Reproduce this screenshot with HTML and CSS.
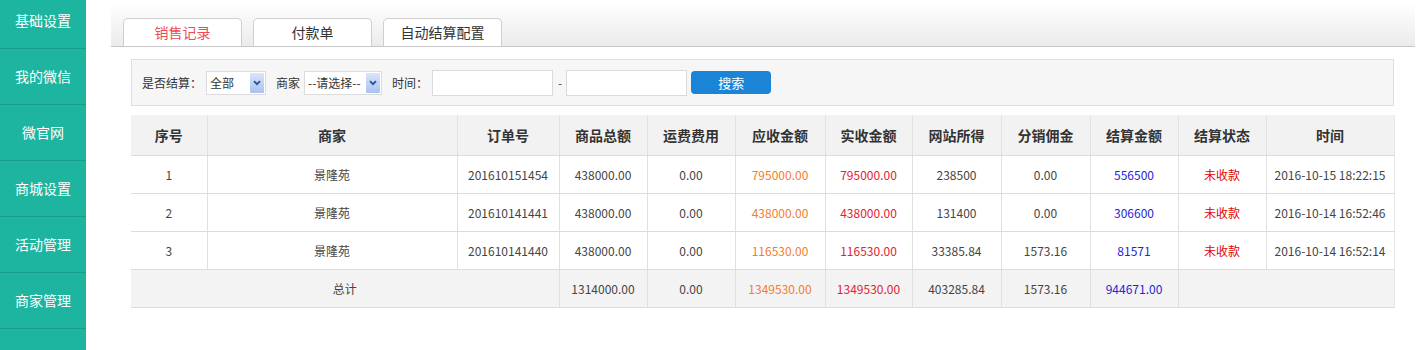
FILE: index.html
```html
<!DOCTYPE html>
<html>
<head>
  <meta charset="utf-8">
  <title>销售记录</title>
  <link rel="stylesheet" href="styles.css">
</head>
<body>
  <div class="page">
    <ul class="menu">
      <li>基础设置</li>
      <li>我的微信</li>
      <li>微官网</li>
      <li>商城设置</li>
      <li>活动管理</li>
      <li>商家管理</li>
      <li></li>
    </ul>

    <div class="main">
      <div class="tabs">
        <a class="tab active">销售记录</a>
        <a class="tab">付款单</a>
        <a class="tab">自动结算配置</a>
      </div>

      <form class="filter">
        <label>是否结算：</label>
        <span class="select" style="width: 60px;">
          <select><option>全部</option><option>已结算</option><option>未结算</option></select>
          <span class="arrow"><svg width="8" height="6" viewBox="0 0 8 6"><path d="M1 1.2 L4 4.2 L7 1.2" fill="none" stroke="#2a4f9c" stroke-width="1.8"/></svg></span>
        </span>
        <label>商家</label>
        <span class="select" style="width: 78px;">
          <select><option>--请选择--</option><option>景隆苑</option></select>
          <span class="arrow"><svg width="8" height="6" viewBox="0 0 8 6"><path d="M1 1.2 L4 4.2 L7 1.2" fill="none" stroke="#2a4f9c" stroke-width="1.8"/></svg></span>
        </span>
        <label>时间：</label>
        <input type="text" class="date">
        <span class="dash">-</span>
        <input type="text" class="date">
        <button type="button" class="btn-search">搜索</button>
      </form>

      <table class="grid">
        <colgroup>
          <col style="width: 76px;">
          <col style="width: 250px;">
          <col style="width: 102px;">
          <col style="width: 88px;">
          <col style="width: 88px;">
          <col style="width: 90px;">
          <col style="width: 87px;">
          <col style="width: 89px;">
          <col style="width: 89px;">
          <col style="width: 88px;">
          <col style="width: 88px;">
          <col style="width: 128px;">
        </colgroup>
        <thead>
          <tr>
            <th>序号</th>
            <th>商家</th>
            <th>订单号</th>
            <th>商品总额</th>
            <th>运费费用</th>
            <th>应收金额</th>
            <th>实收金额</th>
            <th>网站所得</th>
            <th>分销佣金</th>
            <th>结算金额</th>
            <th>结算状态</th>
            <th>时间</th>
          </tr>
        </thead>
        <tbody>
          <tr>
            <td>1</td>
            <td>景隆苑</td>
            <td>201610151454</td>
            <td>438000.00</td>
            <td>0.00</td>
            <td class="orange">795000.00</td>
            <td class="red">795000.00</td>
            <td>238500</td>
            <td>0.00</td>
            <td class="blue">556500</td>
            <td class="status">未收款</td>
            <td>2016-10-15 18:22:15</td>
          </tr>
          <tr>
            <td>2</td>
            <td>景隆苑</td>
            <td>201610141441</td>
            <td>438000.00</td>
            <td>0.00</td>
            <td class="orange">438000.00</td>
            <td class="red">438000.00</td>
            <td>131400</td>
            <td>0.00</td>
            <td class="blue">306600</td>
            <td class="status">未收款</td>
            <td>2016-10-14 16:52:46</td>
          </tr>
          <tr>
            <td>3</td>
            <td>景隆苑</td>
            <td>201610141440</td>
            <td>438000.00</td>
            <td>0.00</td>
            <td class="orange">116530.00</td>
            <td class="red">116530.00</td>
            <td>33385.84</td>
            <td>1573.16</td>
            <td class="blue">81571</td>
            <td class="status">未收款</td>
            <td>2016-10-14 16:52:14</td>
          </tr>
          <tr class="total">
            <td colspan="3">总计</td>
            <td>1314000.00</td>
            <td>0.00</td>
            <td class="orange">1349530.00</td>
            <td class="red">1349530.00</td>
            <td>403285.84</td>
            <td>1573.16</td>
            <td class="blue">944671.00</td>
            <td colspan="2"></td>
          </tr>
        </tbody>
      </table>
    </div>
  </div>
</body>
</html>
```

FILE: styles.css
```css
/* layout */
html, body {
  margin: 0;
  padding: 0;
  height: 100%;
  overflow: hidden;
  background: #fff;
  font-family: "Noto Sans CJK SC", "Microsoft YaHei", sans-serif;
  color: #333;
}

.page {
  display: flex;
  height: 100%;
}

/* left menu */
.menu {
  width: 86px;
  height: 100%;
  flex: none;
  margin: 0;
  padding: 0;
  overflow: hidden;
  list-style: none;
  background: #1db59f;
}

.menu li {
  height: 55px;
  line-height: 55px;
  border-bottom: 1px solid #189f8b;
  text-align: center;
  color: #fff;
  font-size: 14px;
}

.menu li:first-child {
  margin-top: -7px;
}

/* main */
.main {
  flex: 1;
  padding: 5px 0 0 25px;
}

.tabs {
  width: 1292px;
  height: 28px;
  padding: 13px 0 0 12px;
  display: flex;
  gap: 11px;
  align-items: flex-end;
  border-bottom: 1px solid #c8c8c8;
  background: linear-gradient(#fefefe, #ebebeb);
}

.tab {
  box-sizing: border-box;
  width: 119px;
  height: 28px;
  line-height: 27px;
  border: 1px solid #cfcfcf;
  border-bottom: none;
  border-radius: 5px 5px 0 0;
  background: #fff;
  text-align: center;
  font-size: 14px;
  color: #333;
}

.tab.active {
  color: #ef4b55;
}

/* filter bar */
.filter {
  box-sizing: border-box;
  width: 1263px;
  height: 47px;
  margin: 12px 0 0 20px;
  padding: 0 10px;
  display: flex;
  align-items: center;
  border: 1px solid #dedede;
  background: #f6f6f6;
  font-size: 12px;
  color: #333;
}

.filter label {
  margin-right: 4px;
}

.select + label {
  margin-left: 10px;
}

.select {
  position: relative;
  display: inline-block;
  height: 24px;
  box-sizing: border-box;
  border: 1px solid #dcdcdc;
  background: #fff;
}

.select select {
  width: 100%;
  height: 22px;
  border: none;
  padding: 0 0 0 3px;
  background: transparent;
  font: inherit;
  color: #333;
  appearance: none;
  -webkit-appearance: none;
  outline: none;
}

.select .arrow {
  position: absolute;
  top: 1px;
  right: 1px;
  width: 14px;
  height: 20px;
  display: flex;
  align-items: center;
  justify-content: center;
  background: linear-gradient(#d9e5fb, #a9c2ef);
  border-radius: 1px;
}

.date {
  box-sizing: border-box;
  width: 121px;
  height: 26px;
  border: 1px solid #dadada;
  background: #fff;
  padding: 0 4px;
  margin: 0;
}

.dash {
  margin: 0 4px 0 5px;
  color: #555;
}

.btn-search {
  width: 80px;
  height: 23px;
  margin-left: 4px;
  border: none;
  border-radius: 4px;
  background: #1b84d7;
  color: #fff;
  font: inherit;
  font-size: 13px;
  cursor: pointer;
}

/* table */
.grid {
  width: 1263px;
  margin: 9px 0 0 20px;
  border-collapse: collapse;
  table-layout: fixed;
  font-size: 12px;
}

.grid th,
.grid td {
  padding: 0;
  text-align: center;
  border-right: 1px solid #e0e0e0;
  border-bottom: 1px solid #dcdcdc;
  white-space: nowrap;
}

.grid th {
  height: 40px;
  background: #f2f2f2;
  font-size: 14px;
  font-weight: bold;
  color: #333;
  border-right-color: #e2e2e2;
}

.grid td {
  height: 37px;
  color: #444;
}

.grid tr > :last-child {
  border-right-color: #e8e8e8;
}

.grid .total td {
  background: #f3f3f3;
}

.orange {
  color: #f77b2a !important;
}

.red {
  color: #e5202f !important;
}

.blue {
  color: #2424d8 !important;
}

.status {
  color: #e60000 !important;
}
```
